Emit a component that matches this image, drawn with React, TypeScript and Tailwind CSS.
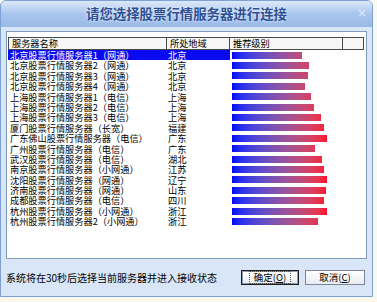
import React from 'react';

interface ServerRow {
  name: string;
  area: string;
  level: number; // bar width in px
}

const servers: ServerRow[] = [
  { name: '北京股票行情服务器1（网通）', area: '北京', level: 70 },
  { name: '北京股票行情服务器2（网通）', area: '北京', level: 77 },
  { name: '北京股票行情服务器3（网通）', area: '北京', level: 76 },
  { name: '北京股票行情服务器4（网通）', area: '北京', level: 73 },
  { name: '上海股票行情服务器1（电信）', area: '上海', level: 79 },
  { name: '上海股票行情服务器2（电信）', area: '上海', level: 82 },
  { name: '上海股票行情服务器3（电信）', area: '上海', level: 89 },
  { name: '厦门股票行情服务器（长宽）', area: '福建', level: 92 },
  { name: '广东佛山股票行情服务器（电信）', area: '广东', level: 95 },
  { name: '广州股票行情服务器（电信）', area: '广东', level: 83 },
  { name: '武汉股票行情服务器（电信）', area: '湖北', level: 90 },
  { name: '南京股票行情服务器（小网通）', area: '江苏', level: 92 },
  { name: '沈阳股票行情服务器（网通）', area: '辽宁', level: 95 },
  { name: '济南股票行情服务器（网通）', area: '山东', level: 94 },
  { name: '成都股票行情服务器（电信）', area: '四川', level: 92 },
  { name: '杭州股票行情服务器（小网通）', area: '浙江', level: 95 },
  { name: '杭州股票行情服务器2（小网通）', area: '浙江', level: 86 },
];

const App = () => {
  const selected = 0;

  return (
    <div className="w-[377px] h-[302px] bg-[#fbf8ee] font-['Noto_Sans_CJK_SC',sans-serif]">
      {/* Window */}
      <div className="w-[373px] h-[297px] flex flex-col bg-[#d9e6f7] border border-[#7d9fd3] rounded-t-[6px] overflow-hidden">
        {/* Title bar */}
        <div className="relative h-[26px] shrink-0 flex items-center justify-center bg-gradient-to-b from-[#dde9fa] via-[#a9c5ed] to-[#98b9e8]">
          <span className="text-[13.4px] font-bold leading-none text-[#2d4f93] [text-shadow:0_0_3px_#ffffff]">
            请您选择股票行情服务器进行连接
          </span>
          <span className="absolute right-[5px] top-[7px] text-[10px] leading-none text-white/80">×</span>
        </div>

        {/* Body */}
        <div className="flex-1 flex flex-col px-[5px] pt-[4px]">
          {/* List box */}
          <div className="h-[228px] bg-white border border-[#7f9db9] pt-[5px] pl-[1px] pr-[2px]">
            {/* Header */}
            <div className="flex h-[13px] border border-[#4a4a4a] bg-[#f6f6f6] text-[9.2px] leading-[11px] text-black">
              <div className="w-[158px] border-r border-[#4a4a4a] pl-[3px]">服务器名称</div>
              <div className="w-[63px] border-r border-[#4a4a4a] pl-[3px]">所处地域</div>
              <div className="w-[113px] border-r border-[#4a4a4a] pl-[3px]">推荐级别</div>
              <div className="flex-1" />
            </div>

            {/* Rows */}
            <div>
              {servers.map((s, i) => (
                <div key={s.name} className="flex h-[10.4px] items-center text-[9.2px] leading-[10.4px]">
                  <div
                    className={`flex w-[222px] h-full ${
                      i === selected ? 'bg-[#0a0af0] text-white' : 'text-black'
                    }`}
                  >
                    <span className="w-[159px] pl-[2px] whitespace-nowrap">{s.name}</span>
                    <span className="pl-[1px]">{s.area}</span>
                  </div>
                  <div className="pl-[2px] flex items-center">
                    <div
                      className="h-[7px] bg-[length:96px_100%] bg-gradient-to-r from-[#0000ff] to-[#ff0022]"
                      style={{ width: `${s.level}px` }}
                    />
                  </div>
                </div>
              ))}
            </div>
          </div>

          {/* Footer */}
          <div className="flex-1 flex items-center justify-between pr-[2px]">
            <span className="text-[10px] text-black leading-none">系统将在30秒后选择当前服务器并进入接收状态</span>
            <div className="flex gap-[6px]">
              <button className="w-[58px] h-[15px] flex items-center justify-center border border-[#1c1c1c] bg-gradient-to-b from-white to-[#e8ecf2] shadow-[inset_0_0_0_1px_#8b9bb0] text-[9.5px] leading-none text-black">
                <span className="border border-dotted border-[#555] px-[4px] py-[1px]">确定(<u>O</u>)</span>
              </button>
              <button className="w-[60px] h-[15px] flex items-center justify-center border border-[#7b8797] bg-gradient-to-b from-white to-[#e8ecf2] text-[9.5px] leading-none text-black">
                取消(<u>C</u>)
              </button>
            </div>
          </div>
        </div>
      </div>
    </div>
  );
};

export default App;
